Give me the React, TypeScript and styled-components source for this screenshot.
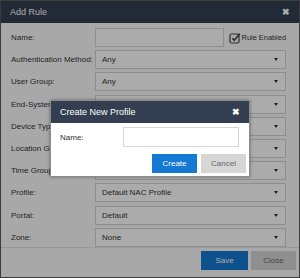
import React from "react";
import styled, { createGlobalStyle } from "styled-components";

const GlobalStyle = createGlobalStyle`
    html, body {
        margin: 0;
        padding: 0;
        background: #ffffff;
    }
    body {
        font-family: "Liberation Sans", Arial, sans-serif;
    }
`;

const navy = "#333f50";
const blue = "#1479d2";

const Stage = styled.div`
    position: relative;
    width: 300px;
    height: 278px;
    overflow: hidden;
`;

const Dialog = styled.div`
    box-sizing: border-box;
    width: 300px;
    height: 278px;
    border: 1px solid #5a5a5a;
    background: #fbfbfb;
    display: flex;
    flex-direction: column;
`;

const Header = styled.div<{ $h: number }>`
    height: ${p => p.$h}px;
    flex: none;
    background: ${navy};
    color: #ffffff;
    display: flex;
    align-items: center;
    justify-content: space-between;
    padding: 0 9px 0 9px;
    box-sizing: border-box;
    font-size: 9px;
`;

const CloseX = styled.span`
    font-size: 9px;
    font-weight: bold;
    line-height: 1;
`;

const Body = styled.div`
    flex: 1;
    padding: 5px 13px 0 10px;
    display: flex;
    flex-direction: column;
    gap: 3.2px;
`;

const Row = styled.div`
    display: grid;
    grid-template-columns: 84px 1fr;
    align-items: center;
`;

const Label = styled.span`
    font-size: 8px;
    color: #333333;
    white-space: nowrap;
`;

const Field = styled.div`
    box-sizing: border-box;
    height: 19px;
    border: 1px solid #d4d4d4;
    background: #ffffff;
    display: flex;
    align-items: center;
    justify-content: space-between;
    padding: 0 6px 0 6px;
    font-size: 8px;
    color: #333333;
`;

const NameLine = styled.div`
    display: flex;
    align-items: center;
    gap: 5px;
`;

const TextBox = styled.div<{ $h: number }>`
    box-sizing: border-box;
    flex: 1;
    height: ${p => p.$h}px;
    border: 1px solid #d6d6d6;
    background: #ffffff;
`;

const Check = styled.label`
    display: flex;
    align-items: center;
    gap: 1px;
    font-size: 7.4px;
    color: #333333;
    white-space: nowrap;
`;

const Caret = styled.span`
    width: 0;
    height: 0;
    border-left: 2.5px solid transparent;
    border-right: 2.5px solid transparent;
    border-top: 3px solid #333333;
    margin-right: 1px;
`;

const Footer = styled.div`
    flex: none;
    height: 26px;
    border-top: 1px solid #e3e3e3;
    display: flex;
    justify-content: flex-end;
    align-items: flex-start;
    gap: 3px;
    padding: 3px 3px 0 0;
`;

const Button = styled.button<{ $primary?: boolean; $w: number }>`
    box-sizing: border-box;
    width: ${p => p.$w}px;
    height: 19px;
    border: none;
    padding: 0;
    font-family: inherit;
    font-size: 8px;
    background: ${p => (p.$primary ? blue : "#d6d6d6")};
    color: ${p => (p.$primary ? "#ffffff" : "#666666")};
`;

const Overlay = styled.div`
    position: absolute;
    inset: 0;
    background: rgba(0, 0, 0, 0.33);
`;

const Modal = styled.div`
    position: absolute;
    left: 50px;
    top: 100px;
    width: 200px;
    height: 77px;
    box-sizing: border-box;
    border: 1px solid #8c8c8c;
    background: #ffffff;
    display: flex;
    flex-direction: column;
    box-shadow: 0 0 3px rgba(0, 0, 0, 0.4);
`;

const ModalBody = styled.div`
    padding: 4px 10px 0 9px;
    display: grid;
    grid-template-columns: 63px 1fr;
    align-items: center;
`;

const ModalActions = styled.div`
    display: flex;
    justify-content: flex-end;
    gap: 4px;
    padding: 7px 3px 0 0;
`;

const CheckIcon = () => (
    <svg width="12" height="12" viewBox="0 0 12 12">
        <rect x="1" y="2" width="9" height="9" rx="1.5" fill="none" stroke="#444" strokeWidth="1.2" />
        <path d="M3.3 6.2 L5.2 8.2 L10.8 1.8" fill="none" stroke="#444" strokeWidth="1.6" />
    </svg>
);

const selects: [string, string][] = [
    ["Authentication Method:", "Any"],
    ["User Group:", "Any"],
    ["End-System Group:", "Any"],
    ["Device Type Group:", "Any"],
    ["Location Group:", "Any"],
    ["Time Group:", "Any"],
    ["Profile:", "Default NAC Profile"],
    ["Portal:", "Default"],
    ["Zone:", "None"],
];

export default function App() {
    return (
        <>
            <GlobalStyle />
            <Stage>
                <Dialog>
                    <Header $h={22}>
                        <span>Add Rule</span>
                        <CloseX>✖</CloseX>
                    </Header>
                    <Body>
                        <Row>
                            <Label>Name:</Label>
                            <NameLine>
                                <TextBox $h={19} />
                                <Check>
                                    <CheckIcon />
                                    Rule Enabled
                                </Check>
                            </NameLine>
                        </Row>
                        {selects.map(([label, value]) => (
                            <Row key={label}>
                                <Label>{label}</Label>
                                <Field>
                                    <span>{value}</span>
                                    <Caret />
                                </Field>
                            </Row>
                        ))}
                    </Body>
                    <Footer>
                        <Button $primary $w={47}>Save</Button>
                        <Button $w={45}>Close</Button>
                    </Footer>
                </Dialog>
                <Overlay />
                <Modal>
                    <Header $h={22}>
                        <span>Create New Profile</span>
                        <CloseX>✖</CloseX>
                    </Header>
                    <ModalBody>
                        <Label>Name:</Label>
                        <TextBox $h={20} />
                    </ModalBody>
                    <ModalActions>
                        <Button $primary $w={45}>Create</Button>
                        <Button $w={45}>Cancel</Button>
                    </ModalActions>
                </Modal>
            </Stage>
        </>
    );
}
